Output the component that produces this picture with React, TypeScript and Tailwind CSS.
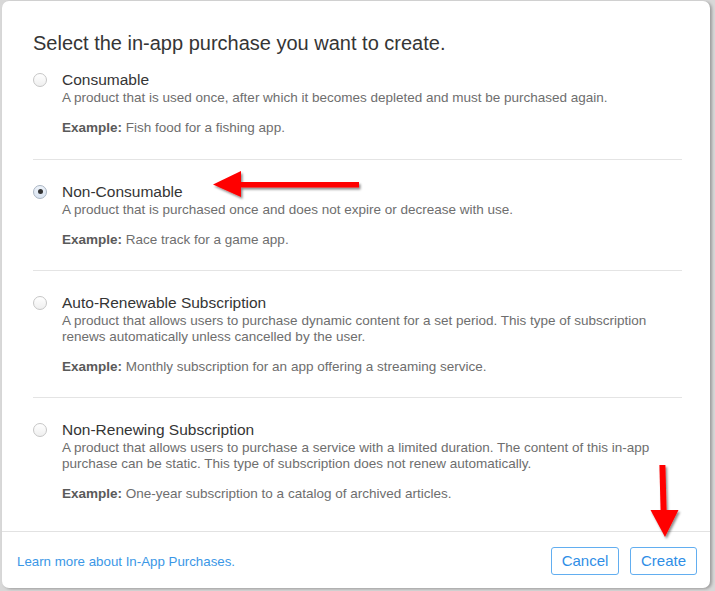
import React from "react";

type Item = { title: string; desc: string; example: string; selected?: boolean };

const items: Item[] = [
  {
    title: "Consumable",
    desc: "A product that is used once, after which it becomes depleted and must be purchased again.",
    example: "Fish food for a fishing app.",
  },
  {
    title: "Non-Consumable",
    desc: "A product that is purchased once and does not expire or decrease with use.",
    example: "Race track for a game app.",
    selected: true,
  },
  {
    title: "Auto-Renewable Subscription",
    desc: "A product that allows users to purchase dynamic content for a set period. This type of subscription renews automatically unless cancelled by the user.",
    example: "Monthly subscription for an app offering a streaming service.",
  },
  {
    title: "Non-Renewing Subscription",
    desc: "A product that allows users to purchase a service with a limited duration. The content of this in-app purchase can be static. This type of subscription does not renew automatically.",
    example: "One-year subscription to a catalog of archived articles.",
  },
];

function Radio({ selected }: { selected?: boolean }) {
  return (
    <div
      className={
        selected
          ? "mt-[3.5px] flex h-[14px] w-[14px] shrink-0 items-center justify-center rounded-full border border-[#a9b4c2] bg-gradient-to-b from-[#eef3fa] to-[#d9e3f0]"
          : "mt-[3.5px] h-[14px] w-[14px] shrink-0 rounded-full border border-[#c6c6c6] bg-gradient-to-b from-white to-[#efefef]"
      }
    >
      {selected && <div className="h-[5px] w-[5px] rounded-full bg-[#333333]" />}
    </div>
  );
}

function Row({ item, cls }: { item: Item; cls: string }) {
  return (
    <div className={"flex gap-[15px] " + cls}>
      <Radio selected={item.selected} />
      <div className="flex min-w-0 flex-1 flex-col">
        <div className="pt-[1px] text-[15.5px] leading-[20px] text-[#353535]">{item.title}</div>
        <div className="text-[13.5px] leading-[16px] text-[#6e6e6e]">{item.desc}</div>
        <div className="mt-[14px] text-[13.5px] leading-[16px] text-[#6e6e6e]">
          <span className="font-bold text-[#5a5a5a]">Example:</span> {item.example}
        </div>
      </div>
    </div>
  );
}

export default function App() {
  return (
    <div
      className="relative h-[591px] w-[715px] overflow-hidden bg-[#d8d8d8] pl-[2px] pt-[1px]"
      style={{ fontFamily: '"Liberation Sans", Arial, sans-serif' }}
    >
      <div className="flex h-[587px] w-[708px] flex-col rounded-[7px] bg-white shadow-[2px_1px_3px_rgba(0,0,0,0.28)]">
        <div className="pl-[31px] pr-[28px] pt-[30px]">
          <h1 className="text-[20px] leading-[24px] text-[#353535]">
            Select the in-app purchase you want to create.
          </h1>
          <Row item={items[0]} cls="pt-[14px] pb-[23px] border-b border-[#e4e4e4]" />
          <Row item={items[1]} cls="pt-[21px] pb-[22px] border-b border-[#e4e4e4]" />
          <Row item={items[2]} cls="pt-[21px] pb-[22px] border-b border-[#e4e4e4]" />
          <Row item={items[3]} cls="pt-[21px]" />
        </div>
        <div className="mt-auto flex items-center justify-between border-t border-[#e2e2e2] pb-[13px] pl-[15px] pr-[13px] pt-[15px]">
          <a className="mt-[2px] text-[13.3px] text-[#3b97e6]">Learn more about In-App Purchases.</a>
          <div className="flex gap-[11px]">
            <button className="h-[28px] w-[68px] rounded-[3px] border border-[#62aef0] text-[15px] text-[#2f8ee6]">
              Cancel
            </button>
            <button className="h-[28px] w-[67px] rounded-[3px] border border-[#62aef0] text-[15px] text-[#2f8ee6]">
              Create
            </button>
          </div>
        </div>
      </div>

      <svg className="pointer-events-none absolute left-0 top-0" width="715" height="591" viewBox="0 0 715 591">
        <defs>
          <filter id="sh" x="-20%" y="-20%" width="140%" height="140%">
            <feDropShadow dx="1.5" dy="2" stdDeviation="1.2" floodColor="#000" floodOpacity="0.45" />
          </filter>
        </defs>
        <g filter="url(#sh)" fill="#ff0000">
          <rect x="238" y="182" width="121" height="5.5" />
          <polygon points="213,184.5 241,171 241,197" />
          <rect x="660" y="465" width="6" height="47" transform="rotate(-1.5 663 488)" />
          <polygon points="650.5,510 678.5,510 665,537" />
        </g>
      </svg>
    </div>
  );
}
